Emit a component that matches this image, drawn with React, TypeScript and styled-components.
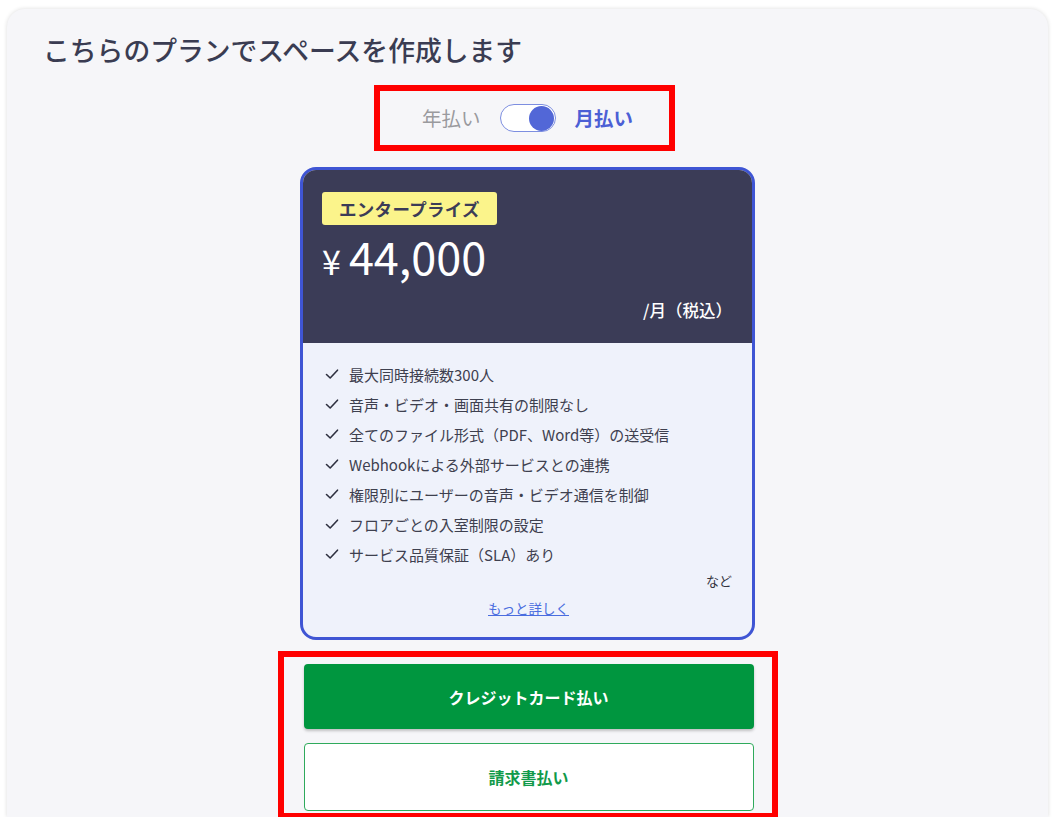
import React from "react";
import styled, { createGlobalStyle } from "styled-components";

const GlobalStyle = createGlobalStyle`
  html, body { margin: 0; padding: 0; background: #ffffff; }
  body { font-family: "Noto Sans CJK JP", "Noto Sans", sans-serif; }
  * { box-sizing: border-box; }
`;

const Panel = styled.section`
  margin: 9px 8px 0 7px;
  width: 1041px;
  height: 808px;
  background: #f6f6f9;
  border-radius: 18px 18px 0 0;
  box-shadow: 0 0 4px rgba(0, 0, 0, 0.14);
  padding-top: 24px;
  display: flex;
  flex-direction: column;
`;

const Title = styled.h1`
  margin: 0;
  padding-left: 36px;
  font-size: 26.8px;
  line-height: 34px;
  font-weight: 500;
  color: #3a3c52;
`;

const Column = styled.div`
  display: flex;
  flex-direction: column;
  align-items: center;
  margin-top: 18px;
`;

const Highlight = styled.div<{ $w: number }>`
  width: ${(p) => p.$w}px;
  border: 6px solid #ff0000;
`;

const ToggleRow = styled(Highlight)`
  height: 66px;
  margin-right: 6px;
  display: flex;
  align-items: center;
  justify-content: center;
  gap: 19px;
  padding-left: 6px;
`;

const ToggleLabel = styled.span<{ $active?: boolean }>`
  font-size: 19.5px;
  line-height: 26px;
  font-weight: ${(p) => (p.$active ? 700 : 400)};
  color: ${(p) => (p.$active ? "#4c5fd5" : "#9a9a9e")};
`;

const Track = styled.span`
  width: 56px;
  height: 28px;
  border-radius: 14px;
  background: #ffffff;
  border: 1.5px solid #7d8ee0;
  display: flex;
  align-items: center;
  justify-content: flex-end;
  padding-right: 1px;
`;

const Knob = styled.span`
  width: 25px;
  height: 25px;
  border-radius: 50%;
  background: #5267d7;
`;

const Card = styled.article`
  margin-top: 16px;
  width: 455px;
  border: 3px solid #3f55d4;
  border-radius: 16px;
  overflow: hidden;
  background: #eff2fb;
`;

const CardHead = styled.div`
  background: #3b3c57;
  height: 173px;
  padding: 22px 20px 0 19px;
  display: flex;
  flex-direction: column;
  align-items: flex-start;
`;

const Badge = styled.span`
  height: 33px;
  padding: 0 17px;
  display: flex;
  align-items: center;
  background: #fbf48b;
  border-radius: 3px;
  font-size: 17.5px;
  font-weight: 700;
  color: #3b3c57;
  letter-spacing: 0.3px;
`;

const Price = styled.div`
  margin-top: 6px;
  height: 50px;
  display: flex;
  align-items: baseline;
  color: #ffffff;
  line-height: 50px;
`;

const Yen = styled.span`
  font-size: 34px;
  margin-right: 8px;
`;

const Amount = styled.span`
  font-size: 45px;
  font-weight: 400;
`;

const PerMonth = styled.div`
  align-self: flex-end;
  margin-top: 17px;
  font-size: 16.5px;
  line-height: 24px;
  font-weight: 500;
  color: #ffffff;
`;

const CardBody = styled.div`
  padding: 16px 20px 17px 22px;
  display: flex;
  flex-direction: column;
`;

const FeatureList = styled.ul`
  margin: 0;
  padding: 0;
  list-style: none;
`;

const Feature = styled.li`
  height: 30px;
  display: flex;
  align-items: center;
  gap: 10px;
  font-size: 15px;
  color: #3e404f;
`;

const Etc = styled.div`
  align-self: flex-end;
  font-size: 13px;
  line-height: 24px;
  color: #33343f;
`;

const More = styled.a`
  align-self: center;
  margin-top: 3px;
  font-size: 13.5px;
  line-height: 24px;
  color: #4a6ddf;
  text-decoration: underline;
  cursor: pointer;
`;

const ButtonBox = styled(Highlight)`
  margin-top: 11px;
  padding: 7px 18px 2px 20px;
  display: flex;
  flex-direction: column;
  gap: 14px;
`;

const PayButton = styled.button<{ $primary?: boolean }>`
  height: ${(p) => (p.$primary ? 65 : 68)}px;
  width: 100%;
  border-radius: 4px;
  font-family: inherit;
  font-size: 16px;
  font-weight: 700;
  cursor: pointer;
  background: ${(p) => (p.$primary ? "#00963f" : "#ffffff")};
  color: ${(p) => (p.$primary ? "#ffffff" : "#119a4a")};
  border: ${(p) => (p.$primary ? "none" : "1px solid #2faa5c")};
  box-shadow: ${(p) => (p.$primary ? "0 2px 3px rgba(0,0,0,0.22)" : "none")};
`;

const Check = () => (
  <svg width="14" height="14" viewBox="0 0 14 14" fill="none">
    <path d="M1.5 7.5 L5.2 11 L12.5 3.2" stroke="#2f3140" strokeWidth="1.6" strokeLinecap="round" strokeLinejoin="round" />
  </svg>
);

const features = [
  "最大同時接続数300人",
  "音声・ビデオ・画面共有の制限なし",
  "全てのファイル形式（PDF、Word等）の送受信",
  "Webhookによる外部サービスとの連携",
  "権限別にユーザーの音声・ビデオ通信を制御",
  "フロアごとの入室制限の設定",
  "サービス品質保証（SLA）あり",
];

export default function App() {
  return (
    <>
      <GlobalStyle />
      <Panel>
        <Title>こちらのプランでスペースを作成します</Title>
        <Column>
          <ToggleRow $w={301}>
            <ToggleLabel>年払い</ToggleLabel>
            <Track>
              <Knob />
            </Track>
            <ToggleLabel $active>月払い</ToggleLabel>
          </ToggleRow>
          <Card>
            <CardHead>
              <Badge>エンタープライズ</Badge>
              <Price>
                <Yen>¥</Yen>
                <Amount>44,000</Amount>
              </Price>
              <PerMonth>/月（税込）</PerMonth>
            </CardHead>
            <CardBody>
              <FeatureList>
                {features.map((f) => (
                  <Feature key={f}>
                    <Check />
                    <span>{f}</span>
                  </Feature>
                ))}
              </FeatureList>
              <Etc>など</Etc>
              <More>もっと詳しく</More>
            </CardBody>
          </Card>
          <ButtonBox $w={500}>
            <PayButton $primary>クレジットカード払い</PayButton>
            <PayButton>請求書払い</PayButton>
          </ButtonBox>
        </Column>
      </Panel>
    </>
  );
}
